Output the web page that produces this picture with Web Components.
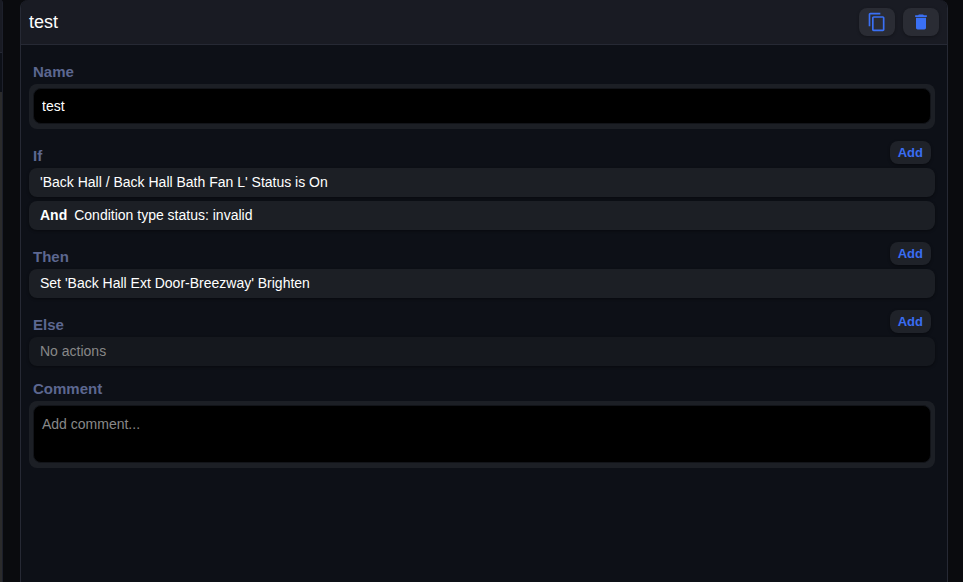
<!DOCTYPE html>
<html lang="en">
<head>
<meta charset="utf-8">
<title>Rule editor</title>
<style>
    html, body {
        height: 100%;
    }

    body {
        margin: 0;
        background: #0a0b0e;
        color: #fff;
        font-family: "Liberation Sans", Arial, sans-serif;
        font-size: 14px;
        overflow: hidden;
    }
</style>
</head>
<body>
<rule-page>
    <rule-panel heading="test">
        <icon-button slot="tools" icon="copy" label="Duplicate"></icon-button>
        <icon-button slot="tools" icon="trash" label="Delete"></icon-button>

        <text-field label="Name" value="test"></text-field>
        <rule-section heading="If" addable>
            <rule-item>'Back Hall / Back Hall Bath Fan L' Status is On</rule-item>
            <rule-item joiner="And">Condition type status: invalid</rule-item>
        </rule-section>
        <rule-section heading="Then" addable>
            <rule-item>Set 'Back Hall Ext Door-Breezway' Brighten</rule-item>
        </rule-section>
        <rule-section heading="Else" addable>
            <rule-item empty>No actions</rule-item>
        </rule-section>
        <text-field label="Comment" placeholder="Add comment..." multiline></text-field>
    </rule-panel>
</rule-page>

<script>
const ICONS = {
    copy: '<path d="M16 1H4c-1.1 0-2 .9-2 2v14h2V3h12V1zm3 4H8c-1.1 0-2 .9-2 2v14c0 1.1.9 2 2 2h11c1.1 0 2-.9 2-2V7c0-1.1-.9-2-2-2zm0 16H8V7h11v14z"/>',
    trash: '<path d="M6 19c0 1.1.9 2 2 2h8c1.1 0 2-.9 2-2V7H6v12zM19 4h-3.500l-1-1h-5l-1 1H5v2h14V4z"/>'
};

class RulePage extends HTMLElement {
    connectedCallback() {
        this.attachShadow({ mode: 'open' });
        this.shadowRoot.innerHTML = `
            <style>
                :host {
                    display: grid;
                    grid-template-columns: 3px minmax(0, 1fr);
                    column-gap: 17px;
                    height: 100%;
                    padding-right: 15px;
                    box-sizing: border-box;
                }

                /* edge of the list column with its scrollbar */
                .list {
                    display: grid;
                    grid-template-rows: 53px 39px 1fr;
                    border-right: 1px solid #1d202b;
                    border-top-right-radius: 3px;
                    background: #0d1017;
                }

                .list-head {
                    background: #191b23;
                    border-bottom: 1px solid #252833;
                }

                .thumb {
                    background: #2b2b2b;
                }
            </style>
            <div class="list">
                <div class="list-head"></div>
                <div></div>
                <div class="thumb"></div>
            </div>
            <slot></slot>
        `;
    }
}

class RulePanel extends HTMLElement {
    connectedCallback() {
        this.attachShadow({ mode: 'open' });
        this.shadowRoot.innerHTML = `
            <style>
                :host {
                    display: flex;
                    flex-direction: column;
                    box-sizing: border-box;
                    background: #0d1017;
                    border: solid #262934;
                    border-width: 0 1px;
                    border-radius: 8px 8px 0 0;
                    overflow: hidden;
                }

                header {
                    display: flex;
                    align-items: center;
                    justify-content: space-between;
                    height: 44px;
                    padding: 0 8px;
                    background: #191b23;
                    border-bottom: 1px solid #262934;
                }

                h1 {
                    margin: 0;
                    font-size: 18px;
                    font-weight: normal;
                }

                .tools {
                    display: flex;
                    gap: 8px;
                }

                main {
                    display: flex;
                    flex-direction: column;
                    gap: 11px;
                    padding: 15px 12px 15px 8px;
                }
            </style>
            <header>
                <h1></h1>
                <div class="tools"><slot name="tools"></slot></div>
            </header>
            <main><slot></slot></main>
        `;
        this.shadowRoot.querySelector('h1').textContent = this.getAttribute('heading');
    }
}

class IconButton extends HTMLElement {
    connectedCallback() {
        this.attachShadow({ mode: 'open' });
        this.shadowRoot.innerHTML = `
            <style>
                :host {
                    display: block;
                }

                button {
                    display: flex;
                    align-items: center;
                    justify-content: center;
                    width: 36px;
                    height: 28px;
                    padding: 0;
                    border: 0;
                    border-radius: 8px;
                    background: #2a2c34;
                    box-shadow: 0 1px 3px rgba(0, 0, 0, 0.3);
                    color: #3a70f5;
                    cursor: pointer;
                }

                svg {
                    width: 20px;
                    height: 20px;
                    fill: currentColor;
                }
            </style>
            <button type="button" aria-label="${this.getAttribute('label')}">
                <svg viewBox="0 0 24 24" aria-hidden="true">${ICONS[this.getAttribute('icon')]}</svg>
            </button>
        `;
    }
}

class TextField extends HTMLElement {
    connectedCallback() {
        const control = this.hasAttribute('multiline')
            ? '<textarea id="field"></textarea>'
            : '<input id="field" type="text">';

        this.attachShadow({ mode: 'open' });
        this.shadowRoot.innerHTML = `
            <style>
                :host {
                    display: block;
                }

                label {
                    display: block;
                    height: 24px;
                    padding-left: 4px;
                    color: #5c6790;
                    font-size: 15px;
                    font-weight: bold;
                    line-height: 24px;
                }

                .frame {
                    padding: 4px 4px 5px;
                    border-radius: 8px;
                    background: #1c1f25;
                }

                input, textarea {
                    display: block;
                    box-sizing: border-box;
                    width: 100%;
                    height: 36px;
                    margin: 0;
                    padding: 0 8px;
                    border: 1px solid #121419;
                    border-radius: 8px;
                    outline: 0;
                    background: #000;
                    color: #fff;
                    font: inherit;
                    resize: none;
                }

                textarea {
                    height: 58px;
                    padding: 10px 8px;
                }

                ::placeholder {
                    color: #888;
                }
            </style>
            <label for="field">${this.getAttribute('label')}</label>
            <div class="frame">${control}</div>
        `;

        const field = this.shadowRoot.getElementById('field');
        field.value = this.getAttribute('value') || '';
        field.placeholder = this.getAttribute('placeholder') || '';
    }
}

class RuleSection extends HTMLElement {
    connectedCallback() {
        this.attachShadow({ mode: 'open' });
        this.shadowRoot.innerHTML = `
            <style>
                :host {
                    display: block;
                }

                .head {
                    display: flex;
                    align-items: flex-start;
                    justify-content: space-between;
                    height: 28px;
                    padding: 0 4px;
                }

                h2 {
                    margin: 0;
                    padding-top: 4px;
                    color: #5c6790;
                    font-size: 15px;
                    line-height: 24px;
                }

                button {
                    height: 23px;
                    margin-top: 1px;
                    padding: 0 8px;
                    border: 0;
                    border-radius: 8px;
                    background: #1f2229;
                    box-shadow: 0 1px 3px rgba(0, 0, 0, 0.4);
                    color: #3a6df2;
                    font: bold 13px "Liberation Sans", Arial, sans-serif;
                    cursor: pointer;
                }

                .items {
                    display: flex;
                    flex-direction: column;
                    gap: 4px;
                }
            </style>
            <div class="head">
                <h2>${this.getAttribute('heading')}</h2>
                ${this.hasAttribute('addable') ? '<button type="button">Add</button>' : ''}
            </div>
            <div class="items"><slot></slot></div>
        `;
    }
}

class RuleItem extends HTMLElement {
    connectedCallback() {
        const joiner = this.getAttribute('joiner');

        this.attachShadow({ mode: 'open' });
        this.shadowRoot.innerHTML = `
            <style>
                :host {
                    display: flex;
                    gap: 7px;
                    padding: 0 11px;
                    border-radius: 8px;
                    background: #1c1f25;
                    box-shadow: 0 1px 3px rgba(0, 0, 0, 0.4);
                    line-height: 29px;
                }

                :host([empty]) {
                    background: #15181e;
                    color: #888;
                }
            </style>
            ${joiner ? `<b>${joiner}</b>` : ''}
            <span><slot></slot></span>
        `;
    }
}

customElements.define('rule-page', RulePage);
customElements.define('rule-panel', RulePanel);
customElements.define('icon-button', IconButton);
customElements.define('text-field', TextField);
customElements.define('rule-section', RuleSection);
customElements.define('rule-item', RuleItem);
</script>
</body>
</html>
